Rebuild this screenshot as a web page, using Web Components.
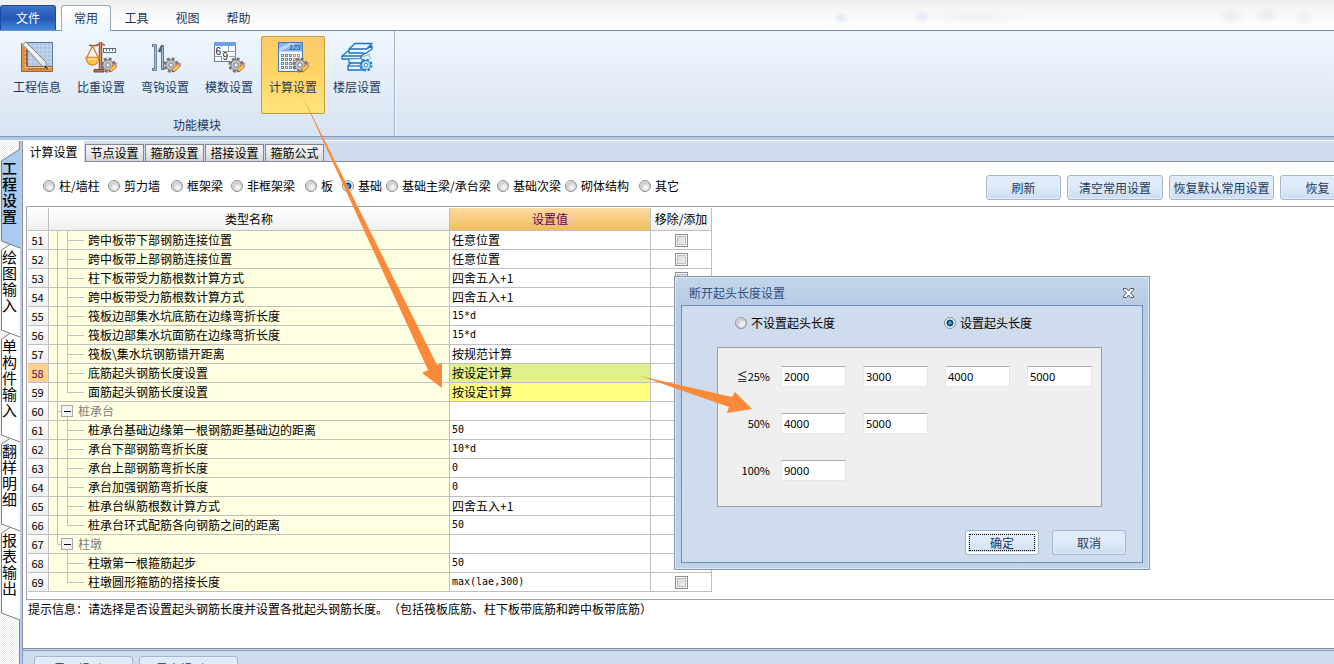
<!DOCTYPE html>
<html lang="zh-CN">
<head>
<meta charset="utf-8">
<title>计算设置</title>
<style>
  html, body { margin: 0; height: 100%; }
  body {
    overflow: hidden;
    font: 12px/16px "Noto Sans CJK SC", "Liberation Sans", sans-serif;
    text-spacing-trim: space-all;
    color: #000;
    background: #cfdcee;
  }
</style>
</head>
<body>
<app-shell></app-shell>
<script>
const controls = `
  * { box-sizing: border-box; }
  button { font: inherit; color: inherit; margin: 0; padding: 0; cursor: pointer; }
  .push {
    height: 25px; border: 1px solid #a3b6d2; border-radius: 3px; color: #1e395b;
    background: linear-gradient(#dfebf8, #e1ecf9 40%, #cbdcef); box-shadow: inset 0 0 0 1px #e4eefa;
    white-space: nowrap; flex: none;
  }
  label { display: flex; align-items: center; gap: 4px; white-space: nowrap; }
  input[type=radio] {
    appearance: none; flex: none; width: 12px; height: 12px; margin: 0; border-radius: 50%;
    border: 1px solid #8e8f8f;
    background: radial-gradient(circle at 60% 65%, #f6f6f6 10%, #c6cacf 60%, #f4f4f4 75%);
  }
  input[type=radio]:checked {
    background: radial-gradient(circle at 50% 50%, #5fd0f5 0, #1a6ea3 26%, #0b3556 44%, #e8eef3 54%, #f4f4f4);
  }
  input[type=checkbox] {
    appearance: none; display: block; width: 13px; height: 13px; margin: 0 auto;
    border: 1px solid #8e8f8f; box-shadow: inset 0 0 0 1px #f4f4f4, inset 0 0 0 2px #b9bdc4;
    background: linear-gradient(135deg, #cfd3da, #f6f6f6);
  }
`;

function define(name, render) {
  customElements.define(name, class extends HTMLElement {
    connectedCallback() {
      if (this.shadowRoot) return;
      this.attachShadow({ mode: "open" }).innerHTML = render(this);
    }
  });
}

/* ---------- ribbon icons ---------- */
const gear = (x, c = "#77787c", f = "#c3c4c6") => `
  <g transform="translate(${x} 24)">
    <circle r="6" fill="none" stroke="${c}" stroke-width="3.4" stroke-dasharray="2.7 2.01"/>
    <circle r="5.2" fill="${f}" stroke="${c}"/>
    <circle r="2.2" fill="#eef3fa" stroke="${c}"/>
  </g>`;
const pencil = x => `
  <g transform="translate(${x} 24)">
    <path d="M1 7L2 3.6L6.6 -1L9 1.4L4.4 6Z" fill="#fbb338" stroke="#c8711c" stroke-width=".8"/>
    <path d="M3 5L7.6 .4" stroke="#ffe07a"/>
    <path d="M6.6 -1L8 -2.6L10.4 -.2L9 1.4Z" fill="#d79ab8" stroke="#9a6688" stroke-width=".7"/>
    <path d="M1 7L1.5 5.2L2.8 6.5Z" fill="#444"/>
  </g>`;
const icons = {
  project: `
    <rect x="6.5" y="1.5" width="25" height="25" fill="#a9c3e6" stroke="#5779a5"/>
    <path d="M10 2V26M14 2V26M18 2V26M22 2V26M26 2V26M30 2V26M7 5H31M7 9H31M7 13H31M7 17H31M7 21H31" stroke="#cfdef2" stroke-width=".8"/>
    <path d="M.5 2.5L5.5 6V25.500H31.500V30.500H.5Z" fill="#dc9148" stroke="#a5642b"/>
    <path d="M1.500 4L4.500 7V26.500H31" fill="none" stroke="#f2be84"/>
    <path d="M8 27v2M11 27v2M14 27v2M17 27v2M20 27v2M23 27v2M26 27v2M4 10h2M4 14h2M4 18h2M4 22h2" stroke="#8d5322"/>
    <path d="M1.500 3.500L5 .8L24.500 20.500L26.500 27L20.500 24.500Z" fill="#dfe3e2" stroke="#7f8b8d"/>
    <path d="M4 3L23 22.500" stroke="#fff" stroke-width="1.600"/>
    <path d="M24.500 24.500L27 27.500L23 26Z" fill="#222"/>`,
  weight: `
    <path d="M14.500 1V29M16.500 1V29" stroke="#985335" stroke-width="1.500"/>
    <path d="M15.500 1V29" stroke="#d99a77"/>
    <path d="M9 28.500H19V31H9Z" fill="#b8734f" stroke="#83452b"/>
    <path d="M4 4Q9 6 15 3M20 4l-4 -1" fill="none" stroke="#a85b36" stroke-width="1.400"/>
    <path d="M7.500 5L2 16M7.500 5L13 16" stroke="#cf8128" stroke-width="1.300"/>
    <path d="M1 16.500H14Q13 24 7.500 24Q2 24 1 16.500Z" fill="#ffc34c" stroke="#e58d16" stroke-width="1.300"/>
    <path d="M3 18H12" stroke="#ffe9b0" stroke-width="1.500"/>
    <rect x="18.500" y="7.500" width="12" height="4" fill="#f1f6fb" stroke="#566c85"/>
    <path d="M21.500 8v2M24.500 8v2M27.500 8v2" stroke="#566c85"/>
    ${gear(23)}${pencil(23)}`,
  hook: `
    <path d="M3 4.500H6.500V28.500H3" fill="none" stroke="#4d6680" stroke-width="2.600"/>
    <path d="M4 4.500H6.500V28.500H4" fill="none" stroke="#c7d6e4" stroke-width=".8"/>
    <path d="M10 11L13.500 4.500V29" fill="none" stroke="#4d6680" stroke-width="2.800"/>
    <path d="M13.500 6V28" stroke="#bccddc" stroke-width=".9"/>
    ${gear(22)}${pencil(22)}`,
  modulus: `
    <rect x="1.500" y="1.500" width="21" height="19" fill="#fff" stroke="#6a7890"/>
    <path d="M1 1H23V5H1Z" fill="#6fa0e9"/>
    <path d="M1 10.500H23M1 15.500H23M8.500 5V20M15.500 5V20" stroke="#8f9fba"/>
    <rect x="2" y="6" width="7" height="9" fill="#fff"/><rect x="9" y="11" width="7" height="9" fill="#fff"/>
    <text x="2.500" y="14" font-family="Liberation Sans" font-size="10" fill="#111">6</text>
    <text x="9.500" y="19" font-family="Liberation Sans" font-size="10" fill="#111">9</text>
    ${gear(23)}${pencil(23)}`,
  calc: `
    <rect x="1.500" y="1.500" width="24" height="29" fill="#f2f7fd" stroke="#4579ad"/>
    <rect x="2" y="2" width="23" height="8.500" fill="#81b2f0"/>
    <path d="M2 10V7L12 2H20L4 10Z" fill="#b7d5fb"/>
    <text x="12" y="9" font-family="Liberation Sans" font-size="7" font-style="italic" fill="#173f83">123</text>
    <g fill="#fff" stroke="#667c93" stroke-width=".9">
      ${[13, 17, 21, 25].map(y => [4, 8, 12, 16, 20].map(x => `<rect x="${x + .5}" y="${y + .5}" width="2" height="2"${x > 15 && y < 18 ? ' stroke="#c88b48"' : ""}/>`).join("")).join("")}
    </g>
    ${gear(23)}${pencil(23)}`,
  floor: `
    <g fill="#eaf5ff" stroke="#1672c9" stroke-width="1.300" stroke-linejoin="round">
      <path d="M7 24.500L12 20H27L23 24.500V29H7Z"/><path d="M7 25H22"/>
      <path d="M1 15L7 10H26L20 15V18H1Z"/><path d="M1 15H20L26 11"/>
      <path d="M8 18.500V22H21V18"/>
      <path d="M8 8L14 2.500H31L25.500 8V12H8Z"/><path d="M8 8H25.500L31 5V8L25.500 12"/>
    </g>
    <g transform="translate(4 4) scale(.84)">${gear(25, "#1b80c5", "#c4e7fa")}</g>
    <path d="M21 16L29 13M28 14L30 18" stroke="#8fb4cf"/>`
};

define("ribbon-button", el => `
  <style>${controls}
    :host { display: block; }
    button {
      display: flex; flex-direction: column; align-items: center; gap: 6px; width: 64px; height: 78px;
      padding-top: 4px; border: 1px solid transparent; border-radius: 2px; background: none; color: #1e395b;
    }
    :host([active]) button { border-color: #c29b3b; background: linear-gradient(#f9cc6c, #ffd264 40%, #ffe57a); }
    svg { display: block; width: 32px; height: 32px; }
    span { line-height: 16px; white-space: nowrap; }
  </style>
  <button type="button"><svg viewBox="0 0 32 32" fill="none" aria-hidden="true">${icons[el.getAttribute("icon")]}</svg><span><slot></slot></span></button>`);

define("menu-tabs", () => `
  <style>${controls}
    :host {
      display: flex; align-items: flex-end; height: 31px; border-bottom: 1px solid #6f93b9;
      background:
        radial-gradient(ellipse 8px 7px at 841px 18px, #dcebf7, transparent),
        radial-gradient(ellipse 9px 8px at 922px 17px, #e4e6fa, transparent),
        radial-gradient(ellipse 55px 8px at 975px 17px, #f0f0f0, transparent),
        radial-gradient(ellipse 14px 9px at 1231px 16px, #e9e9e9, transparent),
        radial-gradient(ellipse 14px 9px at 1267px 15px, #e9e9e9, transparent),
        radial-gradient(ellipse 12px 9px at 1304px 17px, #eee, transparent),
        linear-gradient(#eeeeee, #f8f8f8 40%, #fff);
    }
    button { width: 51px; height: 25px; border: 0; background: none; color: #1e395b; }
    .file {
      width: 56px; height: 25px; margin-right: 5px; border: 1px solid #1f48a1; border-bottom: 0; border-radius: 3px 3px 0 0;
      color: #fff; background: linear-gradient(#3a74cb, #2458b4 50%, #3f83dd);
    }
    .on {
      width: 50px; height: 26px; margin-bottom: -1px; padding-bottom: 1px; border: 1px solid #9aa8bf; border-bottom: 0;
      border-radius: 3px 3px 0 0; background: linear-gradient(#fff, #eff6fe);
    }
  </style>
  <button type="button" class="file">文件</button>
  <button type="button" class="on">常用</button>
  <button type="button">工具</button>
  <button type="button">视图</button>
  <button type="button">帮助</button>`);

define("ribbon-bar", () => `
  <style>
    :host { display: flex; height: 106px; box-sizing: border-box; border-bottom: 1px solid #7f9bbe; background: linear-gradient(#eff6fe, #e4edf8 50%, #d8e4f2); }
    section { display: flex; flex-direction: column; padding: 5px 5px 0; border-right: 1px solid #9fb3cd; box-shadow: 1px 0 #f4f9ff; }
    div { display: flex; }
    h2 { margin: 3px 0 0; font-size: 12px; line-height: 16px; font-weight: 400; text-align: center; color: #1e395b; }
  </style>
  <section>
    <div><slot></slot></div>
    <h2>功能模块</h2>
  </section>`);

/* ---------- vertical page tabs ---------- */
const pages = ["工程设置", "绘图输入", "单构件输入", "翻样明细", "报表输出"];
define("side-tabs", () => `
  <style>${controls}
    :host {
      display: block; flex: none; width: 20px; padding-top: 8px; border-right: 1px solid #8a8a8a;
      background: repeating-conic-gradient(#fff 0 25%, #ececec 0 50%) 0 0 / 2px 2px;
    }
    button {
      display: block; position: relative; width: 19px; padding: 11px 0 14px; border: 0; background: none; color: #000;
      font-size: 15px; line-height: 16px;
    }
    span { position: relative; display: block; width: 15px; margin: 0 2px; word-break: break-all; }
    .on { font-weight: 500; }
    svg { position: absolute; inset: 0; width: 19px; height: 100%; overflow: visible; }
  </style>
  ${pages.map((t, i) => {
    const h = t.length * 16 + 25;
    return `<button type="button" class="${i ? "" : "on"}" style="z-index:${9 - i}">
      <svg aria-hidden="true"><path d="M20 0L1.500 12V${h + 3}L20 ${h + 10}" fill="${i ? "#fff" : "#a9cbf1"}" stroke="#7d7d7d"/></svg><span>${t}</span></button>`;
  }).join("")}`);

define("section-tabs", () => `
  <style>${controls}
    :host { display: flex; align-items: flex-end; height: 21px; background: #cfdcee; border-bottom: 1px solid #858b9b; }
    button {
      width: 59px; height: 17px; margin-left: 1px; border: 1px solid #83868f; border-bottom: 0; line-height: 16px;
      background: linear-gradient(#f4f4f4, #ebebeb 45%, #d6d6d6); white-space: nowrap;
    }
    button.on { width: 61px; height: 21px; margin: 0 0 -1px; border: 0; background: #fff; }
  </style>
  <button type="button" class="on">计算设置</button>
  <button type="button">节点设置</button>
  <button type="button">箍筋设置</button>
  <button type="button">搭接设置</button>
  <button type="button">箍筋公式</button>`);

define("filter-bar", () => `
  <style>${controls}
    :host { display: flex; justify-content: space-between; padding: 13px 0 6px 20px; overflow: hidden; }
    .kinds { display: grid; grid-template-columns: 65px 63px 60px 74px 37px 44px 111px 68px 74px 44px; align-items: center; padding-bottom: 3px; }
    .acts { display: flex; gap: 6px; margin-right: -21px; }
    .a { width: 75px; } .b { width: 96px; } .c { width: 105px; }
  </style>
  <div class="kinds">
    ${["柱/墙柱", "剪力墙", "框架梁", "非框架梁", "板", "基础", "基础主梁/承台梁", "基础次梁", "砌体结构", "其它"]
      .map(t => `<label><input type="radio" name="kind"${t === "基础" ? " checked" : ""}>${t}</label>`).join("")}
  </div>
  <div class="acts">
    <button type="button" class="push a">刷新</button>
    <button type="button" class="push b">清空常用设置</button>
    <button type="button" class="push c">恢复默认常用设置</button>
    <button type="button" class="push a">恢复</button>
  </div>`);

/* ---------- settings table ---------- */
const rows = [
  [51, "跨中板带下部钢筋连接位置", "任意位置"],
  [52, "跨中板带上部钢筋连接位置", "任意位置"],
  [53, "柱下板带受力筋根数计算方式", "四舍五入+1"],
  [54, "跨中板带受力筋根数计算方式", "四舍五入+1"],
  [55, "筏板边部集水坑底筋在边缘弯折长度", "15*d"],
  [56, "筏板边部集水坑面筋在边缘弯折长度", "15*d"],
  [57, "筏板\\集水坑钢筋错开距离", "按规范计算"],
  [58, "底筋起头钢筋长度设置", "按设定计算"],
  [59, "面筋起头钢筋长度设置", "按设定计算"],
  [60, "桩承台", ""],
  [61, "桩承台基础边缘第一根钢筋距基础边的距离", "50"],
  [62, "承台下部钢筋弯折长度", "10*d"],
  [63, "承台上部钢筋弯折长度", "0"],
  [64, "承台加强钢筋弯折长度", "0"],
  [65, "桩承台纵筋根数计算方式", "四舍五入+1"],
  [66, "桩承台环式配筋各向钢筋之间的距离", "50"],
  [67, "柱墩", ""],
  [68, "柱墩第一根箍筋起步", "50"],
  [69, "柱墩圆形箍筋的搭接长度", "max(lae,300)"]
];
const lastInGroup = [59, 66, 69];
function tree(n, group) {
  const outer = n < 67 ? "M8.500 0V18" : n === 67 ? "M8.500 0V9" : "";
  if (group) return `<svg width="26" height="18" aria-hidden="true"><path d="${outer}M8.500 9.500H13M18.500 15V18" stroke="#bfbfbf" fill="none"/>
    <rect x="12.500" y="3.500" width="11" height="11" fill="#f2f4f8" stroke="#a5a5ad"/><path d="M15 9.500H22" stroke="#000"/></svg>`;
  const inner = lastInGroup.includes(n) ? "M18.500 0V9.500" : "M18.500 0V18";
  return `<svg width="36" height="18" aria-hidden="true"><path d="${outer}${inner}M18 9.500H35" stroke="#bfbfbf" fill="none"/></svg>`;
}
define("settings-grid", () => `
  <style>${controls}
    :host { display: block; margin-left: 3px; padding: 1px 1px 7px; border: 1px solid #a3a3aa; border-right: 0; }
    table { width: 684px; table-layout: fixed; border-collapse: separate; border-spacing: 0; }
    th, td { padding: 0; font-weight: 400; border: solid #bfbfbf; border-width: 0 1px 1px 0; white-space: nowrap; }
    thead th { height: 23px; background: linear-gradient(#fff, #efefef); }
    thead .hot { background: linear-gradient(#fbdba4, #f1be5c); color: #60005c; }
    tbody th { height: 19px; background: linear-gradient(#fdfdfd, #f0f0f0); font-size: 11px; line-height: 18px; padding-right: 1px; }
    tbody tr.cur th { background: #ffd28b; color: #60005c; }
    td { height: 19px; line-height: 18px; }
    .name { background: #ffffe1; }
    .name div { display: flex; gap: 3px; height: 18px; }
    .name svg { display: block; flex: none; }
    .group { color: #808080; }
    .val { padding-left: 2px; }
    .mono { font: 10px/18px "DejaVu Sans Mono", "Liberation Mono", monospace; }
    .cur .val { background: #dff08c; }
    .mark .val { background: #ffff80; }
  </style>
  <table>
    <colgroup><col style="width:21px"><col style="width:401px"><col style="width:201px"><col style="width:61px"></colgroup>
    <thead><tr><th></th><th scope="col">类型名称</th><th scope="col" class="hot">设置值</th><th scope="col">移除/添加</th></tr></thead>
    <tbody>
    ${rows.map(([n, name, v]) => {
      const group = v === "";
      return `<tr class="${n === 58 ? "cur" : n === 59 ? "mark" : ""}"><th scope="row">${n}</th>
        <td class="name${group ? " group" : ""}"><div>${tree(n, group)}<span>${name}</span></div></td>
        <td class="val${/^[ -~]+$/.test(v) ? " mono" : ""}">${v}</td>
        <td>${group ? "" : `<input type="checkbox" aria-label="移除/添加 ${n}">`}</td></tr>`;
    }).join("")}
    </tbody>
  </table>`);

/* ---------- length dialog ---------- */
const lengths = [["≦25%", [2000, 3000, 4000, 5000]], ["50%", [4000, 5000]], ["100%", [9000]]];
define("length-dialog", () => `
  <style>${controls}
    :host {
      position: absolute; left: 674px; top: 276px; width: 476px; padding: 0 6px 6px; box-sizing: border-box;
      border: 1px solid #8797ae; box-shadow: inset 0 0 0 1px #dbe7f6; background: linear-gradient(#c4d6ec, #b9cbe4 28px, #c0d2e9);
    }
    header { display: flex; justify-content: space-between; align-items: center; height: 28px; padding: 4px 8px 0; color: #2f4f7a; }
    header button { width: 13px; height: 12px; border: 0; background: none; }
    header svg { display: block; }
    .body { border: 1px solid #6d8fb6; background: #cfdcee; padding: 9px 16px 7px 35px; }
    .modes { display: grid; grid-template-columns: 209px 1fr; padding-left: 18px; }
    .box {
      display: grid; grid-template-columns: 63px 82px 82px 82px 65px; grid-auto-rows: 47px; align-items: center;
      width: 385px; height: 160px; margin: 16px 0 23px; padding-top: 5px; border: 1px solid #9d9d9d; background: #efefef;
    }
    .box label { grid-column: 1; justify-content: flex-end; padding: 0 11px 2px 0; font-size: 11px; }
    .box input {
      width: 65px; height: 21px; padding: 0 2px; border: 1px solid #e2e6ee; border-top-color: #abadb3; background: #fff;
      border-radius: 1px; font: 11px/16px "Noto Sans", sans-serif; color: #000;
    }
    footer { display: flex; justify-content: flex-end; gap: 13px; }
    footer button { width: 74px; }
    .ok { position: relative; border-color: #a3b6d2; box-shadow: inset 0 0 0 2px #fff; }
    .ok::after { content: ""; position: absolute; inset: 3px; border: 1px dotted #000; }
  </style>
  <header><span>断开起头长度设置</span>
    <button type="button" aria-label="关闭"><svg width="13" height="12" aria-hidden="true"><path d="M1.500 1.500H4.500L6.500 4L8.500 1.500H11.500V3L8.500 6L11.500 9V10.500H8.500L6.500 8L4.500 10.500H1.500V9L4.500 6L1.500 3Z" fill="#fff" stroke="#475366"/></svg></button></header>
  <div class="body">
    <div class="modes">
      <label><input type="radio" name="mode">不设置起头长度</label>
      <label><input type="radio" name="mode" checked>设置起头长度</label>
    </div>
    <div class="box">
      ${lengths.map(([t, vs], r) => `<label for="r${r}c0">${t}</label>` +
        vs.map((v, c) => `<input type="text" id="r${r}c${c}"${c ? ` aria-label="${t}"` : ""} value="${v}">`).join("")).join("")}
    </div>
    <footer><button type="button" class="push ok">确定</button><button type="button" class="push">取消</button></footer>
  </div>`);

define("callout-arrows", () => `
  <style>
    :host { position: absolute; inset: 0; pointer-events: none; z-index: 20; }
    svg { display: block; width: 100%; height: 100%; }
  </style>
  <svg aria-hidden="true" fill="#fa8a3a">
    <path d="M301 93L437 365L442 363V388L422 373L428 370Z"/>
    <path d="M640 376L732 397L735 392L752 409L727 413L729 407Z"/>
  </svg>`);

define("app-shell", () => `
  <style>${controls}
    :host { display: flex; flex-direction: column; position: relative; height: 100vh; overflow: hidden; }
    menu-tabs, ribbon-bar { flex: none; }
    .strip { flex: none; height: 4px; border-bottom: 1px solid #f5f9fd; background: #b5c8e0; }
    main { display: flex; flex: 1; min-height: 0; }
    .page { flex: 1; min-width: 0; border-left: 2px solid #b9cbe3; box-shadow: inset 1px 0 #8b98ad; }
    .sheet { background: #fff; border-left: 1px solid #8b93a5; border-bottom: 1px solid #858b9b; }
    p { height: 48px; margin: 0; padding: 1px 5px; }
    nav { display: flex; gap: 6px; margin-top: 1px; padding: 5px 11px; border-top: 1px solid #7f9cc8; border-left: 1px solid #7f9cc8; }
    nav button { width: 99px; line-height: 16px; }
  </style>
  <menu-tabs></menu-tabs>
  <ribbon-bar>
    <ribbon-button icon="project">工程信息</ribbon-button>
    <ribbon-button icon="weight">比重设置</ribbon-button>
    <ribbon-button icon="hook">弯钩设置</ribbon-button>
    <ribbon-button icon="modulus">模数设置</ribbon-button>
    <ribbon-button icon="calc" active>计算设置</ribbon-button>
    <ribbon-button icon="floor">楼层设置</ribbon-button>
  </ribbon-bar>
  <div class="strip"></div>
  <main>
    <side-tabs></side-tabs>
    <div class="page">
      <div class="sheet">
        <section-tabs></section-tabs>
        <filter-bar></filter-bar>
        <settings-grid></settings-grid>
        <p>提示信息：请选择是否设置起头钢筋长度并设置各批起头钢筋长度。（包括筏板底筋、柱下板带底筋和跨中板带底筋）</p>
      </div>
      <nav>
        <button type="button" class="push">导入规则(I)</button>
        <button type="button" class="push">导出规则(O)</button>
      </nav>
    </div>
  </main>
  <length-dialog></length-dialog>
  <callout-arrows></callout-arrows>`);
</script>
</body>
</html>
